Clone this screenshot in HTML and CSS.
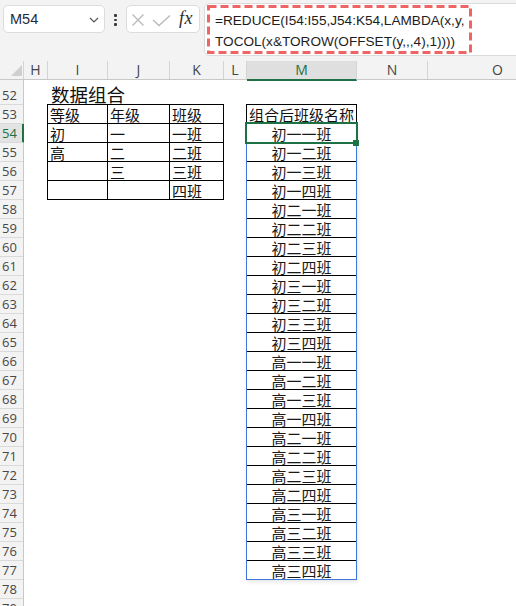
FILE: index.html
```html
<!DOCTYPE html>
<html lang="zh-CN">
<head>
<meta charset="utf-8">
<title>数据组合</title>
<link rel="stylesheet" href="styles.css">
</head>
<body>
<div class="app">
  <div class="formula-bar">
    <div class="namebox">
      <span class="ref">M54</span>
      <svg class="chev" width="10" height="6" viewBox="0 0 10 6"><path d="M1 1 L5 5 L9 1" fill="none" stroke="#555" stroke-width="1.2"/></svg>
    </div>
    <div class="dots"><i></i><i></i><i></i></div>
    <div class="fxbox">
      <svg class="fxicons" width="48" height="26" viewBox="0 0 48 26">
        <path d="M5.5 8.5 L16.5 19.5 M16.5 8.5 L5.5 19.5" stroke="#b9b9b9" stroke-width="1.3" fill="none"/>
        <path d="M26 14 L32 19.5 L43 9.5" stroke="#b9b9b9" stroke-width="1.3" fill="none"/>
      </svg>
      <span class="fx">fx</span>
    </div>
    <div class="formula">
      <div class="ftext">=REDUCE(I54:I55,J54:K54,LAMBDA(x,y,<br>TOCOL(x&amp;TOROW(OFFSET(y,,,4),1))))</div>
      <svg class="mark" width="265" height="49" viewBox="0 0 265 49"><rect x="1.5" y="1.5" width="262" height="46" fill="none" stroke="#ef6464" stroke-width="3" stroke-dasharray="8 4"/></svg>
    </div>
  </div>

  <div class="colheads">
    <div class="corner"><svg width="23" height="18" viewBox="0 0 23 18"><path d="M22 4 L22 15 L11 15 Z" fill="#cfcfcf"/></svg></div>
    <div class="ch c-h">H</div>
    <div class="ch c-i">I</div>
    <div class="ch c-j">J</div>
    <div class="ch c-k">K</div>
    <div class="ch c-l">L</div>
    <div class="ch c-m sel">M</div>
    <div class="ch c-n">N</div>
    <div class="ch c-o">O</div>
  </div>

  <div class="sheet">
    <div class="rowheads">
      <div class="rh r-tall">52</div>
      <div class="rh">53</div>
      <div class="rh sel">54</div>
      <div class="rh">55</div>
      <div class="rh">56</div>
      <div class="rh">57</div>
      <div class="rh">58</div>
      <div class="rh">59</div>
      <div class="rh">60</div>
      <div class="rh">61</div>
      <div class="rh">62</div>
      <div class="rh">63</div>
      <div class="rh">64</div>
      <div class="rh">65</div>
      <div class="rh">66</div>
      <div class="rh">67</div>
      <div class="rh">68</div>
      <div class="rh">69</div>
      <div class="rh">70</div>
      <div class="rh">71</div>
      <div class="rh">72</div>
      <div class="rh">73</div>
      <div class="rh">74</div>
      <div class="rh">75</div>
      <div class="rh">76</div>
      <div class="rh">77</div>
      <div class="rh">78</div>
      <div class="rh">79</div>
    </div>

    <div class="cells">
      <div class="block-left">
        <div class="title">数据组合</div>
        <div class="tbl">
          <div class="td">等级</div><div class="td">年级</div><div class="td">班级</div>
          <div class="td">初</div><div class="td">一</div><div class="td">一班</div>
          <div class="td">高</div><div class="td">二</div><div class="td">二班</div>
          <div class="td"></div><div class="td">三</div><div class="td">三班</div>
          <div class="td"></div><div class="td"></div><div class="td">四班</div>
        </div>
      </div>

      <div class="block-m">
        <div class="mhead">组合后班级名称</div>
        <div class="spill">
          <div class="sc active-cell">初一一班<span class="active"></span><span class="handle"></span></div>
          <div class="sc">初一二班</div>
          <div class="sc">初一三班</div>
          <div class="sc">初一四班</div>
          <div class="sc">初二一班</div>
          <div class="sc">初二二班</div>
          <div class="sc">初二三班</div>
          <div class="sc">初二四班</div>
          <div class="sc">初三一班</div>
          <div class="sc">初三二班</div>
          <div class="sc">初三三班</div>
          <div class="sc">初三四班</div>
          <div class="sc">高一一班</div>
          <div class="sc">高一二班</div>
          <div class="sc">高一三班</div>
          <div class="sc">高一四班</div>
          <div class="sc">高二一班</div>
          <div class="sc">高二二班</div>
          <div class="sc">高二三班</div>
          <div class="sc">高二四班</div>
          <div class="sc">高三一班</div>
          <div class="sc">高三二班</div>
          <div class="sc">高三三班</div>
          <div class="sc">高三四班</div>
        </div>
      </div>
    </div>
  </div>
</div>
</body>
</html>
```

FILE: styles.css
```css
* { box-sizing: border-box; }

html, body {
  margin: 0;
  padding: 0;
  background: #ffffff;
}

.app {
  width: 516px;
  height: 606px;
  overflow: hidden;
  background: #ffffff;
  font-family: "Noto Sans CJK SC", "Noto Sans", sans-serif;
}

/* ---------- formula bar ---------- */
.formula-bar {
  height: 61px;
  background: #f3f3f3;
  display: flex;
  align-items: flex-start;
  padding-left: 3px;
}

.namebox {
  margin-top: 5px;
  width: 102px;
  height: 28px;
  background: #ffffff;
  border: 1px solid #dcdcdc;
  border-radius: 5px;
  display: flex;
  align-items: center;
  justify-content: space-between;
  padding: 0 5px 0 6px;
}

.ref {
  font-family: "Liberation Sans", Arial, sans-serif;
  font-size: 14.5px;
  color: #1f2a3a;
  line-height: 18px;
}

.chev {
  display: block;
  margin-top: 2px;
}

.dots {
  width: 21px;
  margin-top: 14px;
  display: flex;
  flex-direction: column;
  align-items: center;
  gap: 2px;
}

.dots i {
  display: block;
  width: 2.5px;
  height: 2.5px;
  background: #3a3a3a;
  border-radius: 1px;
}

.fxbox {
  margin-top: 5px;
  width: 74px;
  height: 28px;
  background: #ffffff;
  border: 1px solid #dcdcdc;
  border-radius: 5px;
  display: flex;
  align-items: flex-start;
}

.fxicons {
  display: block;
}

.fx {
  font-family: "Liberation Serif", "Times New Roman", serif;
  font-style: italic;
  font-size: 18px;
  line-height: 24px;
  color: #2c2c2c;
  margin-left: 4px;
  letter-spacing: 0.5px;
}

.formula {
  position: relative;
  flex: 1;
  margin-left: 4px;
  margin-top: 3px;
  margin-right: -12px;
  height: 53px;
  background: #ffffff;
  border: 1px solid #dcdcdc;
  border-radius: 5px;
  padding: 6px 0 0 10px;
}

.ftext {
  font-family: "Liberation Sans", Arial, sans-serif;
  font-size: 13.6px;
  line-height: 21px;
  color: #1e1e1e;
  white-space: nowrap;
}

.mark {
  position: absolute;
  left: 2px;
  top: 1px;
  display: block;
}

/* ---------- column headers ---------- */
.colheads {
  display: flex;
  height: 19px;
  background: #f3f3f3;
  border-bottom: 1px solid #c8c8c8;
  font-family: "Open Sans", "Noto Sans", sans-serif;
  font-size: 14px;
  color: #444444;
}

.corner {
  flex: none;
  width: 24px;
  height: 18px;
  border-right: 1px solid #d4d4d4;
}

.corner svg { display: block; }

.ch {
  flex: none;
  height: 18px;
  line-height: 18px;
  text-align: center;
  border-right: 1px solid #d4d4d4;
}

.c-h { width: 24px; }
.c-i { width: 60px; }
.c-j { width: 62px; }
.c-k { width: 54px; }
.c-l { width: 23px; }
.c-m { width: 110px; }
.c-n { width: 71px; }
.c-o { width: 140px; }

.ch.sel {
  background: #dfdfdf;
  color: #1e7145;
  height: 20px;
  line-height: 18px;
  border-bottom: 2px solid #1e7145;
  margin-bottom: -1px;
}

/* ---------- sheet ---------- */
.sheet {
  display: flex;
  align-items: flex-start;
}

.rowheads {
  flex: none;
  width: 24px;
  background: #f3f3f3;
  border-right: 1px solid #c8c8c8;
  font-family: "Open Sans", "Noto Sans", sans-serif;
  font-size: 13px;
  color: #474747;
}

.rh {
  height: 19px;
  border-bottom: 1px solid #dadada;
  display: flex;
  align-items: flex-end;
  line-height: 18px;
  padding-left: 2px;
}

.rh.r-tall { height: 25px; }

.rh.sel {
  background: #e3e3e3;
  color: #1e7145;
  box-shadow: inset -1px 0 0 #1e7145;
  margin-right: -1px;
  border-right: 1px solid #1e7145;
}

.cells {
  display: flex;
  align-items: flex-start;
  padding-left: 23px;
  color: #111111;
}

.block-left {
  flex: none;
  width: 177px;
}

.title {
  height: 24px;
  display: flex;
  align-items: flex-end;
  padding-left: 4px;
  font-size: 18.5px;
  line-height: 20px;
}

.tbl {
  display: grid;
  grid-template-columns: 60px 62px 54px;
  border-left: 1px solid #000000;
  border-top: 1px solid #000000;
}

.td {
  height: 19px;
  border-right: 1px solid #000000;
  border-bottom: 1px solid #000000;
  display: flex;
  align-items: flex-end;
  padding-left: 2px;
  font-size: 15px;
  line-height: 16px;
}

.block-m {
  flex: none;
  width: 111px;
  margin-left: 22px;
  margin-top: 24px;
}

.mhead {
  height: 20px;
  border: 1px solid #000000;
  display: flex;
  align-items: flex-end;
  padding-left: 2px;
  font-size: 15px;
  line-height: 16px;
  white-space: nowrap;
}

.spill {
  border-left: 1px solid #3c78d8;
  border-right: 1px solid #3c78d8;
  border-bottom: 1px solid #3c78d8;
  box-shadow: 1px 2px 4px rgba(0, 0, 0, 0.10);
}

.sc {
  position: relative;
  height: 19px;
  border-bottom: 1px solid #000000;
  display: flex;
  align-items: flex-end;
  justify-content: center;
  font-size: 15px;
  line-height: 16px;
  color: #1a1a1a;
}

.sc:last-child {
  height: 18px;
  border-bottom: none;
}

.active {
  position: absolute;
  left: -2px;
  top: -2px;
  right: -2px;
  bottom: -2px;
  border: 2px solid #1e7145;
  z-index: 2;
}

.handle {
  position: absolute;
  width: 6px;
  height: 6px;
  right: -3px;
  bottom: -4px;
  background: #1e7145;
  z-index: 3;
}
```
